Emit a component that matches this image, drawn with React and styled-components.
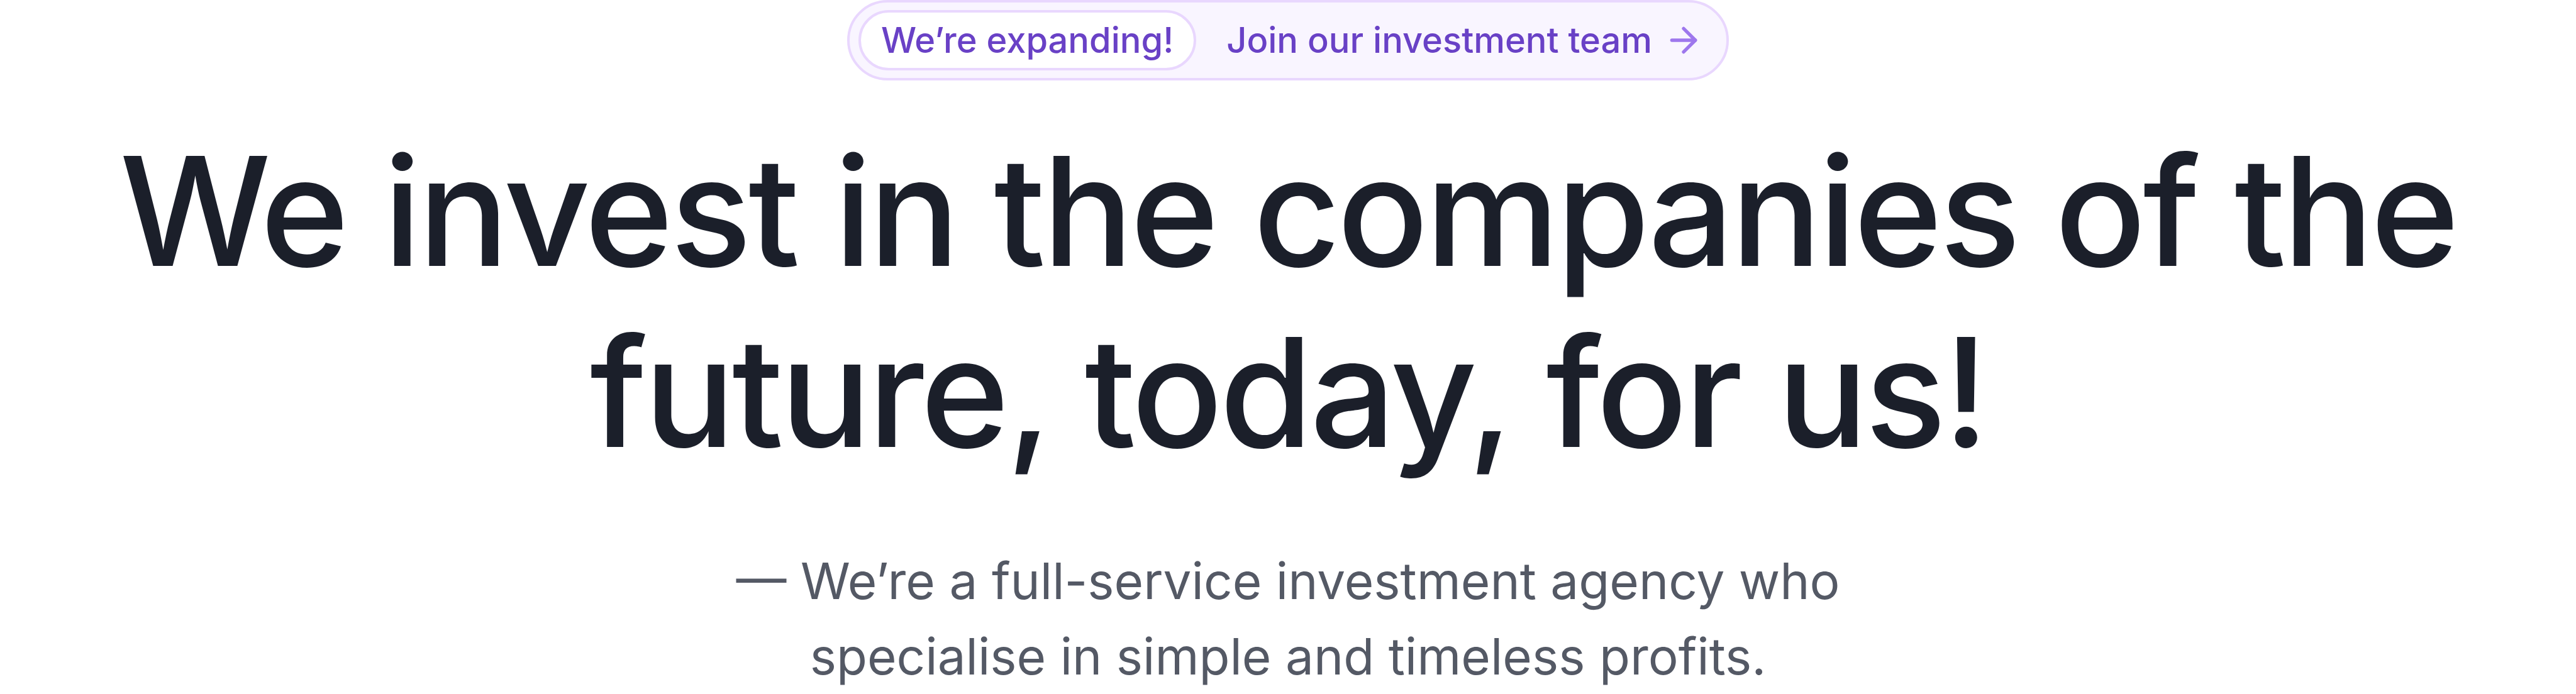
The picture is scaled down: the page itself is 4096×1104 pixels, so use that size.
import React from "react";
import styled, { createGlobalStyle } from "styled-components";

const GlobalStyle = createGlobalStyle`
  html, body {
    margin: 0;
    padding: 0;
    background: #ffffff;
  }
  body {
    font-family: Inter, "Noto Sans", "Liberation Sans", sans-serif;
    -webkit-font-smoothing: antialiased;
  }
`;

const Hero = styled.section`
  display: flex;
  flex-direction: column;
  align-items: center;
  width: 100%;
  padding: 0 128px;
  box-sizing: border-box;
`;

const BadgeGroup = styled.a`
  display: inline-flex;
  align-items: center;
  gap: 48px;
  padding: 12px 36px 12px 14px;
  border: 4px solid #e9d7fe;
  border-radius: 64px;
  background: #f9f5ff;
  color: #6941c6;
  text-decoration: none;
  font-size: 56px;
  line-height: 80px;
  font-weight: 500;
  cursor: pointer;
`;

const InnerBadge = styled.span`
  display: inline-flex;
  align-items: center;
  padding: 4px 32px;
  border: 4px solid #e9d7fe;
  border-radius: 64px;
  background: #ffffff;
`;

const BadgeMessage = styled.span`
  display: inline-flex;
  align-items: center;
  gap: 18px;
`;

const ArrowIcon = styled.svg`
  width: 64px;
  height: 64px;
  flex: none;
  color: #9e77ed;
`;

const Heading = styled.h1`
  margin: 64px 0 0;
  font-size: 240px;
  line-height: 288px;
  font-weight: 500;
  letter-spacing: -4.8px;
  color: #1b1f2a;
  text-align: center;
`;

const Subtitle = styled.p`
  margin: 96px 0 0;
  max-width: 1920px;
  font-size: 80px;
  line-height: 120px;
  font-weight: 400;
  color: #545965;
  text-align: center;
`;

function ArrowRight() {
  return (
    <ArrowIcon
      viewBox="0 0 24 24"
      fill="none"
      stroke="currentColor"
      strokeWidth="2"
      strokeLinecap="round"
      strokeLinejoin="round"
      aria-hidden="true"
    >
      <path d="M5 12h14" />
      <path d="M12 5l7 7-7 7" />
    </ArrowIcon>
  );
}

export default function App() {
  return (
    <>
      <GlobalStyle />
      <Hero>
        <BadgeGroup>
          <InnerBadge>We’re expanding!</InnerBadge>
          <BadgeMessage>
            Join our investment team
            <ArrowRight />
          </BadgeMessage>
        </BadgeGroup>
        <Heading>We invest in the companies of the future, today, for us!</Heading>
        <Subtitle>
          — We’re a full-service investment agency who specialise in simple and
          timeless profits.
        </Subtitle>
      </Hero>
    </>
  );
}
